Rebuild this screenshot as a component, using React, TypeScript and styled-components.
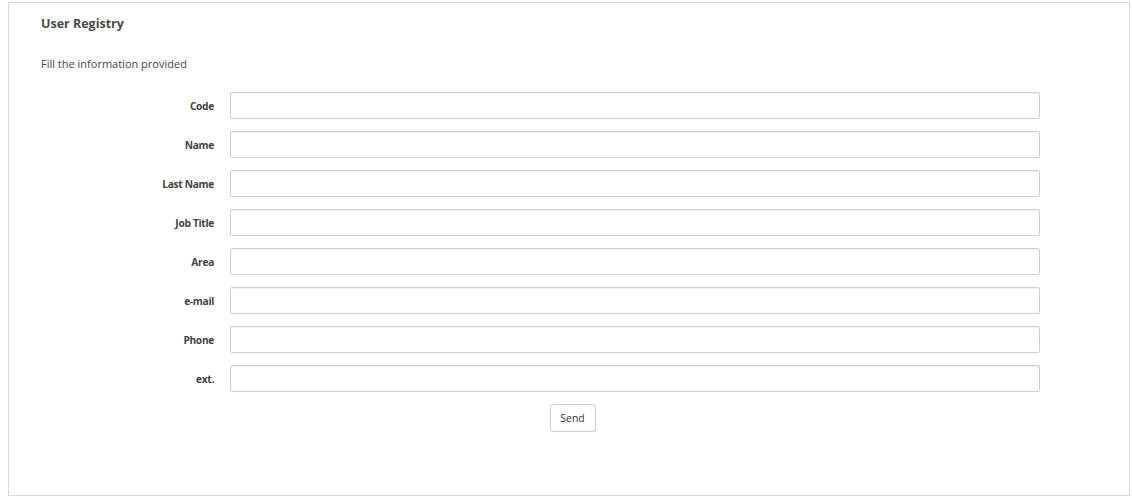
import React from "react";
import styled, { createGlobalStyle } from "styled-components";

const Global = createGlobalStyle`
  html, body { margin: 0; padding: 0; background: #fff; }
  body { font-family: "Open Sans", "Liberation Sans", sans-serif; color: #444; }
  #root { padding: 2px 0 0 8px; }
`;

const Card = styled.div`
  box-sizing: border-box;
  width: 1122px;
  height: 494px;
  border: 1px solid #d9d9d9;
  padding: 12px 24px 0 32px;
`;

const Title = styled.h2`
  margin: 0;
  font-size: 12.5px;
  font-weight: 700;
  color: #4a4a4a;
  line-height: 18px;
`;

const Subtitle = styled.p`
  margin: 23px 0 0;
  font-size: 11px;
  line-height: 16px;
  color: #444;
`;

const Form = styled.form`
  display: grid;
  grid-template-columns: 173px 810px;
  column-gap: 16px;
  row-gap: 12px;
  margin-top: 20px;
  align-items: center;
`;

const Label = styled.label`
  text-align: right;
  font-size: 10.2px;
  font-weight: 700;
  color: #444;
  letter-spacing: -0.3px;
`;

const Input = styled.input`
  box-sizing: border-box;
  height: 27px;
  width: 810px;
  border: 1px solid #cfcfcf;
  border-radius: 2px;
  box-shadow: inset 0 1px 1px rgba(0, 0, 0, 0.06);
  font: inherit;
  padding: 0 8px;
`;

const Actions = styled.div`
  display: flex;
  justify-content: center;
  margin-top: 12px;
  padding-right: 1px;
`;

const Button = styled.button`
  box-sizing: border-box;
  width: 46px;
  height: 28px;
  border: 1px solid #cfcfcf;
  border-radius: 3px;
  background: #fff;
  font-family: "Open Sans", "Liberation Sans", sans-serif;
  font-size: 10.5px;
  color: #333;
  padding: 0;
  cursor: pointer;
`;

const fields = ["Code", "Name", "Last Name", "Job Title", "Area", "e-mail", "Phone", "ext."];

export default function App() {
  return (
    <>
      <Global />
      <Card>
        <Title>User Registry</Title>
        <Subtitle>Fill the information provided</Subtitle>
        <Form onSubmit={(e) => e.preventDefault()}>
          {fields.map((f) => (
            <React.Fragment key={f}>
              <Label>{f}</Label>
              <Input type="text" />
            </React.Fragment>
          ))}
        </Form>
        <Actions>
          <Button type="button">Send</Button>
        </Actions>
      </Card>
    </>
  );
}
